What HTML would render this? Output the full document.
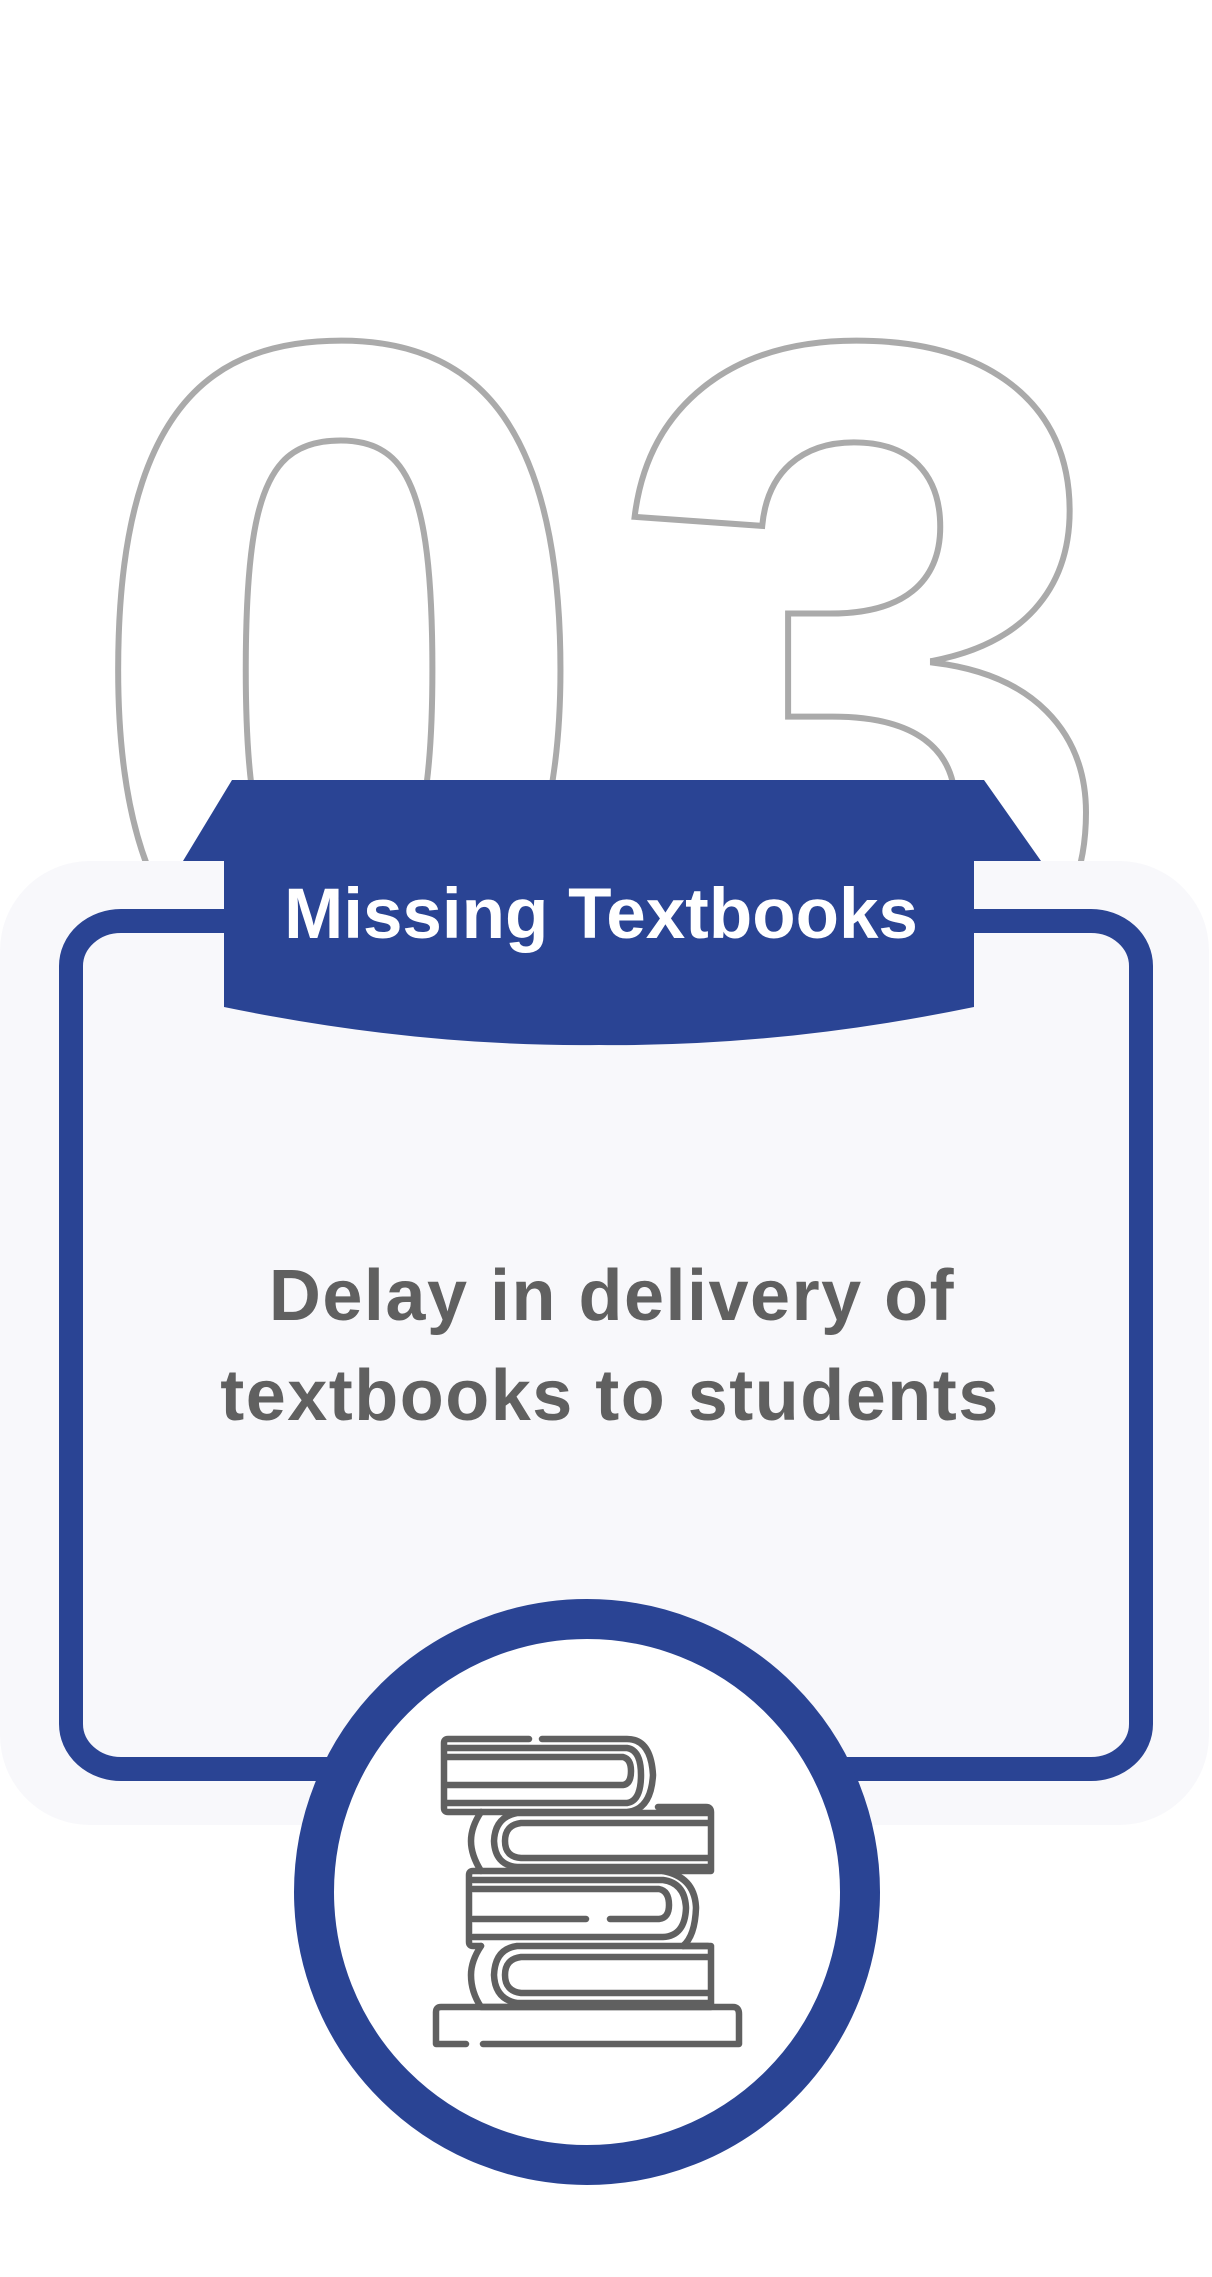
<!DOCTYPE html>
<html><head><meta charset="utf-8"><style>
html,body{margin:0;padding:0;background:#fff;}
body{width:1212px;height:2277px;position:relative;overflow:hidden;font-family:"Liberation Sans",sans-serif;}
.abs{position:absolute;}
</style></head><body>
<svg class="abs" style="left:0;top:0" width="1212" height="2277" viewBox="0 0 1212 2277">
  <text x="340" y="990" text-anchor="middle" font-family="Liberation Sans" font-weight="bold" font-size="930" fill="none" stroke="#aaaaaa" stroke-width="6">0</text>
  <text x="861" y="990" text-anchor="middle" font-family="Liberation Sans" font-weight="bold" font-size="930" fill="none" stroke="#aaaaaa" stroke-width="6">3</text>
  <rect x="0" y="861" width="1209" height="964" rx="90" ry="90" fill="#f8f8fb"/>
  <rect x="71" y="921" width="1070" height="848" rx="50" ry="45" fill="none" stroke="#2a4494" stroke-width="24"/>
  <polygon points="232,780 984,780 1041,861 183,861" fill="#2a4494"/>
  <path d="M224 861 H974 V1007 Q780 1047 599 1045 Q418 1047 224 1007 Z" fill="#2a4494"/>
  <text x="601" y="938" text-anchor="middle" font-family="Liberation Sans" font-weight="bold" font-size="71" fill="#ffffff">Missing Textbooks</text>
  <text x="612" y="1320" text-anchor="middle" font-family="Liberation Sans" font-weight="bold" font-size="72" letter-spacing="1.5" fill="#606060">Delay in delivery of</text>
  <text x="610" y="1420" text-anchor="middle" font-family="Liberation Sans" font-weight="bold" font-size="72" letter-spacing="1.5" fill="#606060">textbooks to students</text>
  <circle cx="587" cy="1892" r="273" fill="#ffffff" stroke="#2a4494" stroke-width="40"/>
  <g transform="translate(433,1737)" fill="none" stroke="#606060" stroke-width="6.5" stroke-linecap="round" stroke-linejoin="round">
    <path d="M96 2 H15 Q11 2 11 6 V71 Q11 75 15 75 H48"/>
    <path d="M109 2 H194 Q218 2 220 38 Q218 73 194 75 H48"/>
    <path d="M14 11 H194 Q208 13 208 38 Q208 64 194 66 H14"/>
    <path d="M14 20 H190 Q198 22 198 34 Q198 47 190 48 H14"/>
    <path d="M48 75 Q38 90 38 104 Q38 118 48 134 H278 V75 Q278 70 273 70 H225"/>
    <path d="M275 76 H84 Q62 80 61 104 Q62 128 84 130 H275"/>
    <path d="M275 86 H88 Q72 88 72 104 Q72 120 88 121 H275"/>
    <path d="M48 134 H40 Q36 134 36 138 V205 Q36 209 40 209 H48"/>
    <path d="M40 143 H230 Q252 146 253 171 Q252 199 230 200 H40"/>
    <path d="M40 152 H226 Q236 154 236 168 Q236 181 226 182 H177"/>
    <path d="M153 182 H40"/>
    <path d="M230 134 Q262 140 263 171 Q262 199 250 209"/>
    <path d="M48 209 Q38 224 38 238 Q38 255 48 270 H278 V209 H250"/>
    <path d="M275 209 H84 Q62 212 61 238 Q62 262 84 266 H275"/>
    <path d="M275 220 H88 Q72 222 72 238 Q72 254 88 256 H275"/>
    <path d="M33 307 H3 V275 Q3 270 8 270 H300 Q306 270 306 277 V307 H50"/>
  </g>
</svg>
</body></html>
